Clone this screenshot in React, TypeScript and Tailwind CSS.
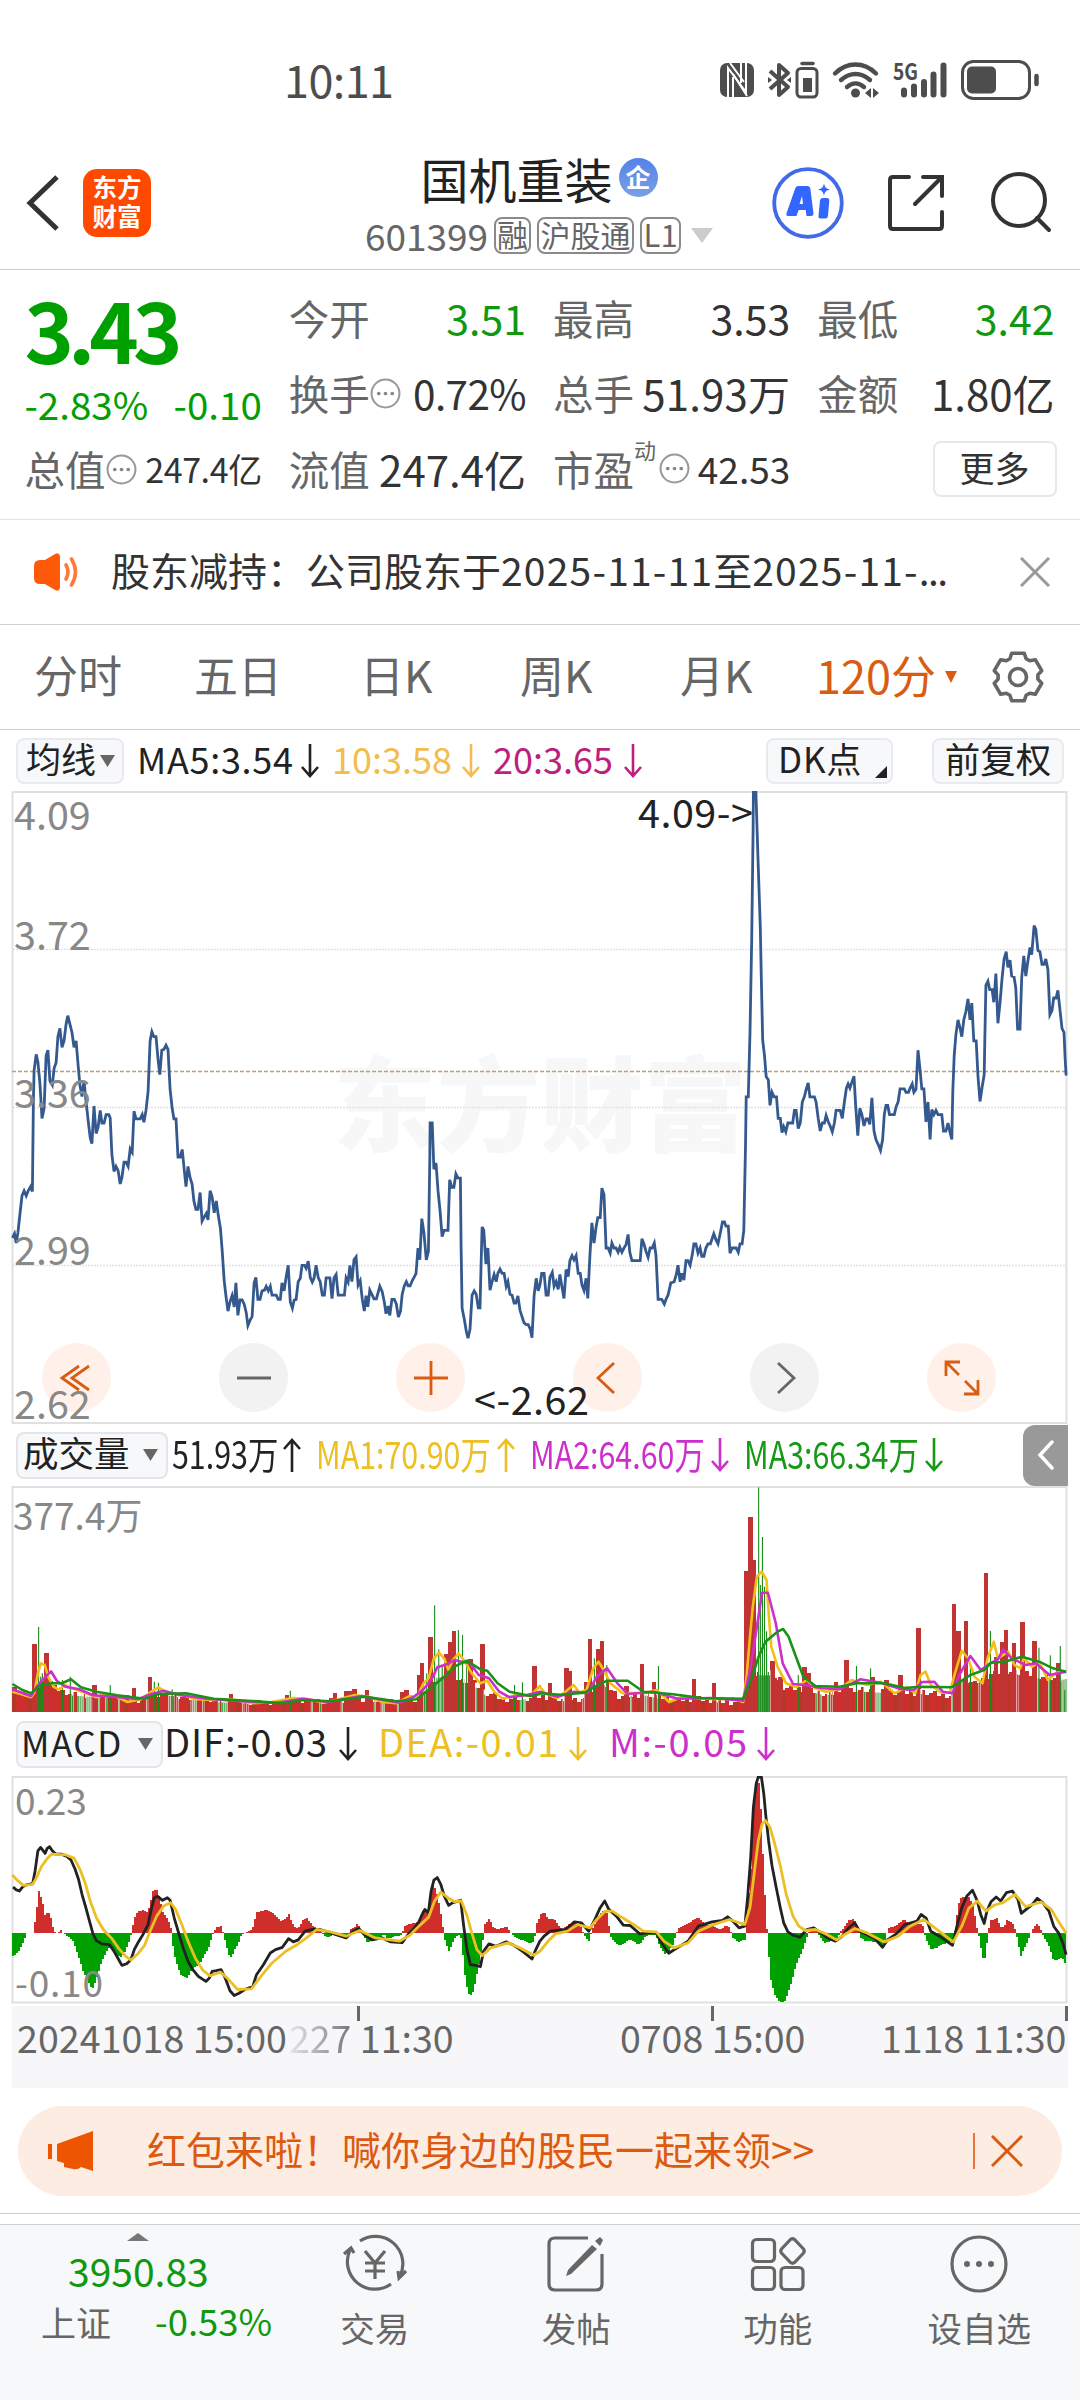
import type { ReactNode } from "react";

type Point = [number, number];

// Every series is stored on a 3136 unit wide grid, split in two halves
const GRID_X = 2.904;
const HALF = 1568;

const join = (left: Point[], right: Point[]): Point[] => [
  ...left,
  ...right.map(([x, y]): Point => [x + HALF, y]),
];

const toPoints = (series: Point[], scaleY: number, offset: number) =>
  series.map(([x, y]) => `${(x / GRID_X).toFixed(1)},${(y / scaleY - offset).toFixed(1)}`).join(" ");

const valueAt = (series: Point[], x: number) => {
  for (let i = 1; i < series.length; i++) {
    const [x0, y0] = series[i - 1];
    const [x1, y1] = series[i];
    if (x <= x1) return y0 + ((y1 - y0) * (x - x0)) / (x1 - x0 || 1);
  }
  return series[series.length - 1][1];
};

const PRICE = join(
  [
    [36, 1088], [42, 1078], [47, 1100], [52, 1076], [58, 1030], [64, 988], [70, 976], [76, 988], [82, 976], [89, 966], [94, 978],
    [97, 760], [99, 690], [105, 652], [110, 670], [116, 720], [122, 804], [128, 780], [134, 655], [139, 642], [145, 715], [152, 725],
    [157, 685], [163, 672], [168, 610], [174, 590], [180, 635], [186, 620], [192, 580], [197, 560], [203, 580], [209, 600], [215, 635],
    [221, 620], [227, 680], [232, 725], [238, 752], [244, 715], [250, 765], [256, 810], [262, 850], [267, 864], [273, 775], [279, 840],
    [285, 825], [291, 785], [296, 815], [302, 815], [308, 795], [316, 795], [320, 803], [325, 890], [331, 930], [337, 918], [343, 928],
    [349, 960], [354, 945], [360, 908], [366, 908], [372, 918], [378, 876], [384, 884], [389, 787], [395, 805], [407, 805], [413, 795],
    [418, 813], [424, 785], [430, 740], [436, 620], [441, 598], [447, 610], [453, 610], [459, 665], [464, 700], [470, 642], [476, 640],
    [482, 630], [488, 640], [494, 735], [500, 780], [505, 805], [511, 805], [517, 896], [523, 896], [529, 878], [535, 925], [540, 966],
    [546, 918], [552, 945], [558, 960], [563, 1000], [569, 1020], [575, 1020], [581, 980], [587, 1048], [593, 1038], [599, 1030],
    [604, 1045], [610, 976], [616, 990], [622, 1028], [628, 1000], [634, 1035], [640, 1065], [645, 1115], [651, 1190], [656, 1225],
    [662, 1262], [668, 1240], [674, 1225], [680, 1252], [685, 1195], [691, 1272], [697, 1235], [703, 1235], [709, 1245], [715, 1265],
    [720, 1296], [726, 1284], [732, 1275], [738, 1195], [743, 1182], [749, 1234], [755, 1234], [761, 1214], [768, 1212], [773, 1203],
    [779, 1214], [785, 1203], [790, 1224], [802, 1224], [808, 1234], [814, 1234], [819, 1195], [825, 1214], [831, 1180], [837, 1153],
    [843, 1240], [849, 1255], [854, 1236], [860, 1234], [866, 1192], [872, 1184], [877, 1153], [884, 1153], [889, 1160], [895, 1143],
    [901, 1182], [907, 1193], [912, 1184], [918, 1153], [924, 1182], [930, 1192], [936, 1224], [942, 1224], [947, 1183], [958, 1183],
    [964, 1232], [970, 1183], [976, 1175], [982, 1224], [1000, 1224], [1005, 1183], [1011, 1193], [1016, 1153], [1022, 1192],
    [1028, 1140], [1034, 1133], [1040, 1200], [1046, 1190], [1052, 1234], [1058, 1262], [1063, 1225], [1068, 1252], [1074, 1212],
    [1080, 1222], [1086, 1233], [1093, 1233], [1103, 1203], [1110, 1216], [1116, 1240], [1121, 1268], [1127, 1250], [1132, 1272],
    [1138, 1234], [1145, 1234], [1151, 1245], [1157, 1276], [1163, 1262], [1168, 1222], [1174, 1202], [1180, 1192], [1185, 1202],
    [1191, 1202], [1197, 1190], [1208, 1173], [1214, 1112], [1219, 1140], [1225, 1042], [1231, 1075], [1238, 1140], [1244, 1120],
    [1248, 900], [1249, 815], [1255, 815], [1260, 925], [1266, 910], [1272, 975], [1278, 1025], [1284, 1085], [1290, 1070],
    [1301, 1070], [1306, 950], [1312, 968], [1318, 968], [1324, 936], [1330, 946], [1337, 946], [1339, 1110], [1342, 1255],
    [1348, 1280], [1354, 1310], [1359, 1326], [1365, 1305], [1371, 1224], [1377, 1214], [1383, 1222], [1389, 1254], [1394, 1254],
    [1397, 1150], [1400, 1062], [1405, 1070], [1411, 1150], [1417, 1112], [1423, 1212], [1429, 1192], [1435, 1175], [1441, 1192],
    [1446, 1172], [1452, 1162], [1458, 1172], [1464, 1172], [1470, 1203], [1475, 1192], [1481, 1222], [1487, 1224], [1493, 1243],
    [1498, 1243], [1504, 1226], [1510, 1260], [1516, 1275], [1522, 1290], [1528, 1294], [1534, 1294], [1540, 1305], [1545, 1325],
    [1551, 1225], [1557, 1184], [1563, 1214],
  ],
  [
    [0, 1200], [5, 1172], [12, 1172], [18, 1224], [24, 1224], [29, 1182], [36, 1170], [41, 1203], [47, 1192], [53, 1210], [58, 1175],
    [64, 1205], [70, 1232], [76, 1163], [82, 1180], [87, 1142], [93, 1130], [99, 1140], [105, 1130], [111, 1172], [117, 1172],
    [122, 1200], [128, 1213], [134, 1184], [139, 1232], [145, 1130], [151, 1052], [157, 1100], [163, 1062], [168, 1040], [175, 1040],
    [180, 970], [186, 985], [192, 1112], [198, 1112], [204, 1124], [209, 1100], [215, 1112], [221, 1112], [227, 1122], [232, 1110],
    [238, 1122], [244, 1112], [250, 1104], [256, 1080], [261, 1122], [267, 1142], [291, 1142], [296, 1090], [302, 1102], [308, 1120],
    [314, 1134], [320, 1112], [326, 1112], [332, 1100], [337, 1130], [343, 1234], [354, 1234], [361, 1245], [366, 1234], [372, 1224],
    [380, 1195], [390, 1192], [396, 1175], [401, 1153], [407, 1192], [412, 1172], [418, 1188], [424, 1142], [430, 1142], [436, 1153],
    [442, 1130], [447, 1102], [453, 1102], [459, 1124], [465, 1112], [470, 1132], [476, 1132], [482, 1112], [488, 1102], [495, 1102],
    [505, 1078], [511, 1092], [517, 1102], [523, 1080], [530, 1050], [536, 1050], [540, 1060], [547, 1060], [552, 1124], [558, 1112],
    [570, 1112], [576, 1122], [581, 1102], [587, 1102], [592, 1070], [597, 870], [599, 753], [605, 753], [610, 600], [615, 380],
    [619, 120], [620, 27], [627, 27], [633, 180], [640, 350], [643, 480], [647, 618], [652, 655], [657, 705], [663, 712], [668, 773],
    [674, 742], [680, 753], [687, 753], [692, 804], [698, 804], [703, 838], [708, 824], [714, 836], [720, 815], [734, 815],
    [739, 785], [744, 785], [750, 828], [756, 815], [762, 765], [768, 752], [774, 732], [779, 720], [784, 753], [797, 753], [802, 765],
    [808, 804], [814, 834], [820, 815], [826, 815], [831, 797], [837, 812], [843, 822], [849, 836], [855, 815], [860, 785], [872, 785],
    [878, 804], [884, 765], [890, 732], [895, 722], [900, 732], [907, 715], [912, 704], [917, 775], [923, 845], [929, 780], [935, 795],
    [941, 822], [947, 805], [952, 805], [958, 818], [964, 755], [970, 834], [976, 855], [983, 867], [989, 880], [995, 855],
    [1000, 795], [1005, 773], [1010, 773], [1015, 795], [1029, 795], [1035, 775], [1040, 765], [1046, 734], [1058, 734], [1063, 742],
    [1070, 742], [1075, 732], [1081, 722], [1086, 742], [1092, 735], [1098, 642], [1104, 690], [1109, 734], [1115, 734], [1121, 812],
    [1127, 765], [1133, 854], [1138, 783], [1144, 795], [1150, 785], [1156, 795], [1167, 795], [1172, 834], [1179, 834], [1185, 815],
    [1191, 838], [1196, 854], [1199, 740], [1203, 655], [1208, 605], [1214, 570], [1220, 590], [1225, 610], [1231, 570], [1237, 550],
    [1243, 520], [1249, 570], [1254, 530], [1260, 620], [1267, 620], [1272, 705], [1278, 764], [1284, 730], [1290, 700], [1292, 620],
    [1295, 488], [1301, 478], [1306, 498], [1313, 498], [1318, 528], [1324, 460], [1330, 578], [1336, 530], [1342, 470], [1348, 425],
    [1354, 408], [1359, 445], [1365, 428], [1370, 466], [1377, 468], [1382, 495], [1387, 592], [1394, 592], [1399, 470], [1405, 418],
    [1411, 466], [1417, 430], [1423, 398], [1428, 415], [1435, 346], [1440, 355], [1446, 405], [1452, 408], [1458, 438], [1464, 438],
    [1469, 425], [1475, 450], [1481, 558], [1487, 548], [1492, 518], [1499, 518], [1504, 500], [1510, 545], [1516, 590], [1522, 600],
    [1525, 660], [1528, 702],
  ],
);

const VOLUME_FLOOR = join(
  [
    [36, 838], [90, 862], [108, 825], [135, 800], [155, 835], [200, 850], [270, 855], [340, 858], [400, 870], [440, 850], [500, 852],
    [560, 864], [650, 872], [740, 876], [830, 872], [900, 870], [960, 872], [1020, 862], [1090, 868], [1160, 872], [1200, 865],
    [1230, 840], [1260, 800], [1300, 790], [1330, 810], [1370, 815], [1400, 845], [1450, 865], [1500, 865], [1540, 860],
  ],
  [
    [0, 855], [60, 868], [120, 865], [150, 830], [185, 820], [220, 855], [300, 850], [380, 868], [450, 865], [520, 872], [590, 872],
    [600, 800], [630, 790], [670, 790], [700, 830], [760, 835], [830, 850], [900, 838], [960, 840], [1020, 845], [1100, 845],
    [1190, 858], [1205, 800], [1260, 820], [1300, 790], [1350, 780], [1400, 790], [1450, 800], [1500, 810], [1530, 800],
  ],
);

const VOLUME_UP = join(
  [
    [100, 703], [135, 730], [274, 826], [390, 834], [436, 801], [670, 852], [832, 856], [972, 848], [1006, 842], [1018, 844],
    [1029, 836], [1065, 841], [1168, 845], [1180, 841], [1216, 796], [1226, 760], [1250, 680], [1296, 733], [1308, 696],
    [1319, 664], [1366, 748], [1401, 702], [1552, 769],
  ],
  [
    [30, 819], [77, 774], [88, 784], [134, 816], [146, 686], [169, 717], [181, 694], [251, 828], [297, 762], [332, 815], [448, 808],
    [506, 819], [599, 482], [611, 321], [622, 450], [675, 752], [698, 800], [768, 771], [780, 790], [860, 815], [890, 750],
    [966, 802], [1006, 810], [1047, 795], [1099, 654], [1203, 583], [1215, 663], [1238, 634], [1296, 489], [1325, 740], [1342, 696],
    [1354, 660], [1377, 698], [1401, 637], [1436, 693], [1505, 759],
  ],
);

const VOLUME_DOWN = join(
  [
    [112, 651], [118, 800], [123, 790], [181, 810], [204, 800], [320, 825], [448, 815], [460, 818], [500, 838], [843, 842], [1239, 790],
    [1262, 586], [1274, 718], [1284, 770], [1331, 660], [1343, 675], [1355, 750], [1494, 825], [1517, 817],
  ],
  [
    [158, 745], [194, 765], [344, 768], [635, 232], [646, 381], [640, 525], [652, 530], [658, 664], [663, 786], [750, 795], [919, 768],
    [960, 775], [1250, 770], [1308, 663], [1449, 713], [1482, 736], [1511, 708], [1524, 840],
  ],
);

// Thin gaps where two falling bars sit side by side
const VOLUME_GAPS = [
  210, 228, 234, 240, 252, 258, 264, 287, 308, 345, 427, 491, 497, 503, 515, 556, 562, 568, 590, 635, 646, 652, 658, 706, 718, 905,
  930, 992, 1088, 1108, 1114, 1155, 1232, 1268, 1274, 1280, 1286, 1345, 1351, 1382, 1407, 1512, 1518, 1524, 1636, 1694, 1758, 1832,
  1873, 1879, 1896, 1910, 2083, 2204, 2210, 2216, 2222, 2228, 2234, 2371, 2383, 2404, 2414, 2488, 2510, 2543, 2549, 2555, 2675, 2764,
  2793, 2844, 2954, 3014, 3046, 3083, 3089, 3095,
];

const VOLUME_MA1 = join(
  [
    [36, 845], [60, 852], [90, 862], [100, 848], [110, 790], [118, 760], [130, 765], [140, 800], [155, 830], [170, 838], [190, 825],
    [210, 835], [250, 850], [280, 862], [300, 855], [330, 855], [370, 876], [410, 868], [435, 848], [460, 832], [480, 845],
    [520, 852], [570, 868], [620, 870], [670, 868], [730, 880], [790, 876], [850, 864], [890, 866], [940, 878], [990, 866],
    [1030, 855], [1070, 860], [1110, 876], [1150, 880], [1190, 858], [1210, 862], [1230, 820], [1245, 805], [1260, 745], [1275, 728],
    [1290, 745], [1302, 780], [1315, 750], [1332, 730], [1350, 755], [1370, 790], [1395, 820], [1415, 812], [1435, 845],
    [1460, 866], [1500, 855], [1540, 858], [1568, 828],
  ],
  [
    [0, 830], [15, 850], [50, 865], [80, 840], [98, 825], [115, 848], [135, 840], [155, 775], [170, 755], [185, 780], [205, 820],
    [240, 850], [300, 848], [340, 840], [375, 876], [420, 858], [450, 864], [510, 868], [560, 866], [590, 876], [600, 800],
    [610, 680], [618, 590], [630, 500], [644, 485], [658, 510], [665, 620], [672, 710], [690, 770], [715, 820], [745, 832],
    [775, 810], [800, 835], [830, 845], [870, 838], [905, 810], [950, 825], [990, 815], [1030, 850], [1065, 832], [1090, 850],
    [1105, 795], [1120, 785], [1135, 825], [1165, 848], [1190, 848], [1205, 790], [1225, 722], [1243, 745], [1262, 800],
    [1285, 820], [1300, 745], [1318, 695], [1330, 745], [1360, 725], [1378, 765], [1395, 775], [1405, 745], [1430, 770],
    [1450, 755], [1475, 810], [1500, 788], [1515, 785], [1528, 785],
  ],
);

const VOLUME_MA2 = join(
  [
    [36, 838], [90, 858], [105, 832], [125, 808], [148, 784], [165, 812], [190, 830], [230, 838], [270, 856], [330, 860], [400, 868],
    [440, 852], [475, 842], [520, 855], [600, 866], [700, 874], [800, 879], [880, 866], [950, 876], [1050, 858], [1100, 868],
    [1160, 878], [1200, 862], [1230, 838], [1255, 805], [1270, 772], [1300, 762], [1320, 750], [1340, 755], [1365, 760],
    [1390, 795], [1420, 805], [1450, 845], [1480, 862], [1530, 855], [1568, 845],
  ],
  [
    [0, 845], [50, 860], [100, 845], [140, 848], [165, 800], [195, 775], [225, 820], [255, 852], [330, 845], [400, 866], [500, 864],
    [590, 872], [612, 770], [630, 650], [645, 548], [662, 548], [685, 640], [705, 760], [735, 822], [770, 825], [820, 835],
    [870, 838], [930, 808], [990, 818], [1050, 838], [1085, 840], [1110, 816], [1145, 815], [1170, 845], [1198, 850], [1220, 790],
    [1250, 738], [1280, 780], [1305, 762], [1330, 748], [1345, 718], [1370, 745], [1410, 765], [1440, 760], [1480, 795], [1528, 785],
  ],
);

const VOLUME_MA3 = join(
  [
    [36, 822], [65, 840], [90, 850], [115, 828], [150, 820], [180, 820], [206, 808], [235, 832], [280, 845], [340, 856], [420, 866],
    [460, 852], [540, 850], [620, 866], [720, 872], [820, 880], [880, 870], [960, 874], [1060, 860], [1150, 874], [1210, 868],
    [1250, 835], [1290, 800], [1320, 770], [1355, 752], [1395, 778], [1415, 782], [1445, 820], [1480, 845], [1540, 858], [1568, 852],
  ],
  [
    [0, 850], [60, 854], [130, 848], [160, 830], [195, 812], [255, 812], [300, 845], [380, 852], [470, 864], [590, 866], [615, 805],
    [635, 740], [655, 695], [690, 665], [706, 657], [722, 680], [745, 745], [765, 800], [800, 828], [870, 830], [920, 820],
    [1000, 820], [1060, 834], [1100, 830], [1195, 832], [1250, 795], [1290, 780], [1310, 758], [1350, 755], [1400, 740],
    [1450, 755], [1490, 775], [1528, 785],
  ],
);

const MACD_BARS = join(
  [
    [36, 735], [52, 722], [68, 690], [76, 666], [96, 664], [104, 600], [112, 537], [118, 560], [125, 585], [130, 618], [135, 605],
    [143, 605], [150, 640], [158, 664], [166, 664], [176, 657], [184, 668], [200, 677], [210, 690], [218, 710], [228, 740],
    [238, 775], [250, 800], [262, 825], [268, 830], [276, 810], [284, 785], [292, 755], [302, 735], [314, 710], [320, 705],
    [330, 725], [348, 738], [360, 725], [370, 700], [380, 668], [385, 640], [392, 610], [400, 600], [416, 597], [424, 605],
    [432, 590], [436, 570], [442, 540], [455, 537], [463, 565], [470, 600], [482, 620], [494, 640], [498, 690], [505, 730],
    [514, 765], [524, 790], [534, 795], [543, 800], [552, 780], [560, 768], [578, 760], [590, 735], [604, 710], [614, 675],
    [620, 660], [628, 648], [640, 645], [648, 670], [655, 700], [662, 730], [670, 738], [680, 715], [690, 700], [698, 675],
    [712, 662], [726, 660], [736, 640], [742, 605], [752, 602], [772, 597], [790, 603], [804, 620], [816, 630], [830, 620],
    [838, 608], [846, 635], [858, 650], [868, 648], [878, 628], [890, 622], [904, 640], [912, 648], [930, 660], [938, 672],
    [950, 680], [965, 672], [990, 675], [1010, 680], [1016, 655], [1030, 648], [1037, 636], [1045, 655], [1055, 670], [1062, 690],
    [1072, 694], [1085, 682], [1100, 685], [1115, 666], [1120, 682], [1135, 680], [1150, 674], [1165, 672], [1172, 645],
    [1190, 638], [1205, 635], [1216, 625], [1225, 600], [1235, 595], [1245, 600], [1252, 520], [1258, 520], [1268, 550],
    [1276, 590], [1284, 640], [1288, 675], [1294, 700], [1303, 722], [1310, 700], [1320, 680], [1335, 667], [1340, 700],
    [1347, 780], [1355, 830], [1362, 853], [1370, 850], [1376, 825], [1385, 780], [1393, 740], [1402, 680], [1406, 640],
    [1420, 622], [1428, 645], [1440, 655], [1455, 650], [1470, 648], [1480, 662], [1490, 675], [1505, 684], [1520, 688],
    [1535, 697], [1550, 692], [1556, 640], [1566, 620],
  ],
  [
    [0, 608], [14, 606], [22, 625], [40, 625], [50, 640], [65, 655], [80, 640], [100, 634], [115, 640], [125, 668], [135, 682],
    [142, 692], [148, 660], [158, 640], [170, 615], [182, 598], [192, 600], [198, 640], [205, 680], [220, 698], [235, 702],
    [250, 690], [265, 685], [280, 698], [295, 695], [300, 680], [315, 672], [335, 670], [345, 700], [360, 728], [370, 725],
    [385, 700], [395, 665], [402, 652], [425, 640], [440, 630], [456, 618], [470, 630], [480, 640], [500, 645], [520, 655],
    [540, 643], [550, 650], [558, 680], [575, 692], [595, 685], [600, 600], [610, 500], [620, 270], [627, 210], [636, 220],
    [642, 330], [648, 480], [654, 595], [660, 690], [668, 800], [680, 850], [695, 873], [710, 868], [720, 840], [730, 810],
    [740, 770], [750, 740], [760, 720], [770, 690], [778, 662], [800, 650], [810, 675], [825, 695], [845, 690], [862, 685],
    [870, 662], [885, 645], [895, 628], [910, 622], [920, 645], [930, 680], [945, 690], [960, 690], [985, 695], [995, 705],
    [1005, 670], [1012, 650], [1030, 645], [1055, 625], [1070, 635], [1085, 640], [1110, 640], [1118, 680], [1135, 715],
    [1150, 710], [1165, 700], [1180, 695], [1200, 690], [1208, 620], [1218, 560], [1245, 558], [1258, 590], [1265, 640],
    [1275, 680], [1283, 740], [1292, 740], [1300, 660], [1308, 628], [1325, 620], [1335, 645], [1345, 650], [1355, 625],
    [1370, 635], [1380, 660], [1388, 700], [1395, 735], [1405, 710], [1415, 690], [1425, 665], [1435, 645], [1443, 636],
    [1453, 655], [1462, 680], [1475, 700], [1490, 748], [1515, 740], [1530, 770],
  ],
);

const DIF = join(
  [
    [38, 528], [46, 536], [56, 540], [66, 528], [76, 522], [95, 518], [102, 480], [110, 420], [118, 410], [124, 418], [131, 428],
    [137, 413], [144, 408], [152, 420], [162, 430], [178, 430], [194, 437], [206, 447], [218, 475], [228, 505], [238, 550],
    [248, 585], [260, 630], [270, 668], [280, 688], [296, 698], [318, 700], [330, 718], [342, 740], [354, 762], [368, 757],
    [380, 745], [390, 715], [402, 692], [416, 668], [430, 640], [438, 600], [448, 560], [458, 556], [472, 568], [486, 560],
    [494, 568], [506, 620], [520, 670], [532, 710], [546, 750], [560, 775], [576, 795], [598, 810], [608, 800], [616, 780],
    [628, 778], [642, 775], [654, 800], [668, 838], [680, 852], [694, 845], [712, 833], [734, 825], [745, 790], [765, 760],
    [785, 725], [800, 715], [820, 708], [838, 682], [852, 692], [866, 686], [886, 660], [905, 655], [930, 655], [960, 665],
    [1005, 680], [1025, 660], [1042, 652], [1060, 672], [1080, 686], [1110, 680], [1135, 692], [1168, 694], [1185, 670],
    [1200, 655], [1215, 635], [1228, 605], [1234, 595], [1244, 605], [1252, 540], [1260, 508], [1270, 500], [1280, 520],
    [1290, 555], [1303, 583], [1315, 575], [1338, 568], [1346, 640], [1356, 715], [1366, 760], [1382, 762], [1395, 766],
    [1404, 720], [1420, 698], [1440, 705], [1470, 692], [1492, 702], [1518, 720], [1545, 743], [1556, 715], [1568, 690],
  ],
  [
    [12, 675], [30, 660], [75, 655], [100, 632], [120, 635], [142, 660], [158, 628], [175, 590], [188, 570], [200, 595], [222, 615],
    [242, 642], [262, 643], [290, 668], [320, 664], [338, 665], [350, 690], [374, 726], [395, 712], [430, 690], [460, 645],
    [500, 632], [530, 628], [545, 617], [560, 630], [578, 650], [595, 645], [603, 560], [612, 440], [620, 290], [628, 220],
    [634, 200], [643, 200], [650, 250], [656, 315], [664, 390], [674, 465], [686, 530], [698, 590], [708, 635], [720, 662],
    [735, 672], [755, 678], [775, 655], [795, 650], [815, 665], [835, 680], [858, 690], [875, 678], [895, 652], [914, 635],
    [928, 660], [945, 668], [970, 680], [995, 708], [1010, 685], [1035, 668], [1060, 640], [1095, 630], [1107, 610], [1122, 622],
    [1135, 660], [1160, 675], [1198, 702], [1212, 640], [1225, 590], [1240, 555], [1256, 538], [1270, 570], [1280, 610],
    [1290, 637], [1298, 600], [1310, 572], [1325, 558], [1338, 570], [1355, 545], [1372, 540], [1388, 565], [1398, 607],
    [1412, 595], [1430, 580], [1444, 562], [1460, 575], [1478, 600], [1492, 645], [1508, 668], [1520, 700], [1528, 730],
  ],
);

const DEA = join(
  [
    [36, 492], [50, 508], [68, 523], [95, 520], [106, 500], [120, 468], [136, 445], [150, 430], [190, 432], [215, 442], [232, 475],
    [248, 518], [262, 570], [280, 620], [300, 655], [325, 682], [345, 712], [365, 735], [380, 746], [400, 728], [420, 702],
    [436, 660], [455, 615], [475, 585], [495, 575], [510, 595], [528, 640], [548, 695], [568, 742], [590, 778], [610, 793],
    [640, 782], [660, 800], [690, 834], [730, 832], [760, 792], [790, 755], [830, 720], [860, 702], [890, 680], [920, 655],
    [960, 662], [1005, 675], [1045, 658], [1090, 680], [1160, 690], [1190, 672], [1220, 642], [1245, 618], [1262, 570],
    [1280, 543], [1300, 560], [1320, 572], [1340, 570], [1355, 610], [1370, 665], [1385, 715], [1400, 733], [1425, 710],
    [1475, 695], [1510, 710], [1550, 732], [1568, 720],
  ],
  [
    [0, 720], [25, 688], [45, 668], [80, 660], [110, 640], [145, 650], [165, 625], [190, 600], [210, 600], [240, 620], [275, 642],
    [300, 660], [338, 662], [360, 690], [390, 710], [430, 695], [460, 660], [500, 642], [550, 625], [595, 640], [610, 590],
    [622, 490], [634, 390], [645, 340], [655, 330], [668, 350], [682, 400], [698, 465], [715, 550], [735, 615], [752, 645],
    [770, 658], [800, 655], [830, 668], [862, 686], [885, 670], [915, 652], [950, 665], [1000, 692], [1040, 675], [1075, 645],
    [1115, 625], [1140, 645], [1200, 692], [1225, 645], [1245, 592], [1270, 570], [1295, 600], [1320, 582], [1345, 575],
    [1380, 550], [1410, 587], [1455, 573], [1485, 595], [1505, 630], [1528, 666],
  ],
);

const MACD_SCALE = 2.984;
const MACD_ZERO = 666;

function Caret({ className = "" }: { className?: string }) {
  return (
    <svg className={`shrink-0 ${className}`} width="15" height="12" viewBox="0 0 15 12">
      <path d="M0 0h15L7.5 12z" fill="#666" />
    </svg>
  );
}

function Arrow({ up = false }: { up?: boolean }) {
  return (
    <svg className="shrink-0" width="20" height="34" viewBox="0 0 20 34" fill="none" stroke="currentColor" strokeWidth="2.6">
      {up ? <path d="M10 34V2M2 11l8-9 8 9" /> : <path d="M10 0v32M2 23l8 9 8-9" />}
    </svg>
  );
}

function Dots() {
  return (
    <svg className="shrink-0" width="31" height="31" viewBox="0 0 30 30">
      <circle cx="15" cy="15" r="13.5" fill="none" stroke="#999" strokeWidth="2" />
      <g fill="#888">
        <circle cx="8.5" cy="15" r="1.8" />
        <circle cx="15" cy="15" r="1.8" />
        <circle cx="21.5" cy="15" r="1.8" />
      </g>
    </svg>
  );
}

function Stat({
  label,
  value,
  mark,
  valueClass = "text-[41.5px]",
}: {
  label: string;
  value: string;
  mark?: ReactNode;
  valueClass?: string;
}) {
  return (
    <div className="flex h-[75.5px] items-center whitespace-nowrap pb-1">
      <span className="text-[40.5px] text-[#666]">{label}</span>
      {mark}
      <span className={`ml-auto ${valueClass}`}>{value}</span>
    </div>
  );
}

// Text drawn narrower than the font, inside a box of its final width
function Narrow({ className, children }: { className: string; children: ReactNode }) {
  return (
    <span className={`block shrink-0 whitespace-nowrap ${className}`}>
      <span className="inline-block origin-left scale-x-[0.8]">{children}</span>
    </span>
  );
}

function RoundButton({ gray = false, children }: { gray?: boolean; children: ReactNode }) {
  return (
    <div
      className={`flex size-[69px] items-center justify-center rounded-full ${
        gray ? "bg-[#00000c]/5 text-[#666]" : "bg-[#ff6a20]/10 text-[#d95c13]"
      }`}
    >
      <svg width="36" height="36" viewBox="0 0 36 36" fill="none" stroke="currentColor" strokeWidth="2.8">
        {children}
      </svg>
    </div>
  );
}

function StatusBar() {
  return (
    <div className="flex h-[104px] items-center pt-[56px] text-[#4d4d4d]">
      <span className="ml-[284px] w-[436px] pb-1 text-[45px] tracking-[-0.6px]">10:11</span>
      <svg width="320" height="60" viewBox="0 -10 320 60" fill="none" stroke="#4d4d4d">
        <rect x="0" y="3" width="34" height="34" rx="7" fill="#4d4d4d" stroke="none" />
        <path d="M8 38V8l18 24V2" stroke="#fff" strokeWidth="2" />
        <path d="M13 38V17M21 3v20M10 3l14 19M13 14l14 22" stroke="#fff" strokeWidth="2" />
        <path d="M50 11l18 16-9 8V5l9 8-18 16" strokeWidth="4" strokeLinejoin="round" />
        <path d="M48 17l4 3-4 3zM71 17l-4 3 4 3z" fill="#4d4d4d" stroke="none" />
        <rect x="77" y="8.500" width="20" height="28.500" rx="4" strokeWidth="3" />
        <path d="M82 3.500h11" strokeWidth="3.500" strokeLinecap="round" />
        <rect x="83" y="18" width="9" height="14" fill="#4d4d4d" stroke="none" />
        <path d="M115 13.500c12-12 29-12 41 0M121 20c9-8 20-8 29 0M127 27c6-5 11-5 17 0" strokeWidth="4.400" strokeLinecap="round" />
        <circle cx="135.500" cy="33" r="4.500" fill="#4d4d4d" stroke="none" />
        <path d="M145 33l6-5v10zM153 28v10l6-5z" fill="#4d4d4d" stroke="none" />
        <text x="173" y="20" fontSize="23" fontWeight="700" textLength="25" lengthAdjust="spacingAndGlyphs" fill="#4d4d4d" stroke="none">
          5G
        </text>
        <path d="M184 30.500v4M194 26.500v8M204 22v12.500M213.500 14.500v20M223.500 5.500v29" strokeWidth="6" strokeLinecap="round" />
        <rect x="242.500" y="1.500" width="67" height="37" rx="11" strokeWidth="3" />
        <rect x="247" y="6.500" width="29" height="27" rx="5" fill="#4d4d4d" stroke="none" />
        <path d="M316.500 16v8" strokeWidth="4.500" strokeLinecap="round" />
      </svg>
    </div>
  );
}

function Header() {
  return (
    <header className="flex h-[166px] items-center border-b border-[#cfcfcf]">
      <div className="flex w-[360px] items-center pl-[26px] pt-8">
        <svg width="34" height="56" viewBox="0 0 34 56" fill="none" stroke="#333" strokeWidth="5">
          <path d="M31 2L4 28l27 26" />
        </svg>
        <div className="ml-[23px] flex size-[68px] items-center justify-center rounded-[14px] bg-[#ff4800] pb-1 text-center text-[24.5px] leading-[29px] font-bold text-white">
          东方
          <br />
          财富
        </div>
      </div>
      <div className="flex w-[358px] flex-col items-center pt-7">
        <div className="flex items-center">
          <span className="text-[48px] leading-[60px] text-[#222]">国机重装</span>
          <span className="ml-1.5 flex size-[39px] items-center justify-center rounded-full bg-linear-to-b from-[#5580e8] to-[#7ba0e6] pb-[3px] text-[25px] font-bold text-white">
            企
          </span>
        </div>
        <div className="mt-[9px] flex items-center gap-1.5 text-[32px] text-[#666]">
          <span className="text-[37px]">601399</span>
          <span className="flex h-[37px] w-[37px] items-center justify-center rounded-lg border-2 border-[#8a8a8a] pb-[3px] text-[31px]">融</span>
          <span className="flex h-[37px] w-[97px] items-center justify-center rounded-lg border-2 border-[#8a8a8a] pb-[3px] text-[30px]">沪股通</span>
          <span className="flex h-[37px] w-[41px] items-center justify-center rounded-lg border-2 border-[#8a8a8a] pb-[3px] text-[31px]">L1</span>
          <svg className="ml-1" width="22" height="15" viewBox="0 0 22 15">
            <path d="M0 0h22L11 15z" fill="#ccc" />
          </svg>
        </div>
      </div>
      <svg className="ml-[54px] mt-8" width="72" height="72" viewBox="0 0 72 72" fill="#3366ff">
        <circle cx="36" cy="36" r="33.800" fill="none" stroke="#4169e8" strokeWidth="3.800" />
        <path
          fillRule="evenodd"
          d="M26 19h9q3 0 3.400 3l3 24q.4 3-2.400 3h-4.500l-.8-6h-7l-2.300 6h-8q-3 0-1.800-3l8.400-24q1-3 3-3zm4 10l-2.500 8h3.500z"
        />
        <path d="M50.500 31h4.500q2.500 0 2.300 2.500l-1.300 15.500q-.3 2.500-2.800 2.500h-4.500q-2.500 0-2.200-2.500l1.500-15.500q.2-2.500 2.500-2.500zM52 16.500c1 4 2 5 6 6-4 1-5 2-6 6-1-4-2-5-6-6 4-1 5-2 6-6z" />
      </svg>
      <svg className="ml-[43px] mt-8" width="60" height="60" viewBox="0 0 60 60" fill="none" stroke="#333" strokeWidth="4" strokeLinecap="round">
        <path d="M22 4H6q-3 0-3 3v46q0 3 3 3h46q3 0 3-3V39M36 4h19v19M55 4L28 31" />
      </svg>
      <svg className="ml-[43px] mt-8" width="64" height="64" viewBox="0 0 64 64" fill="none" stroke="#333" strokeWidth="4" strokeLinecap="round">
        <circle cx="29" cy="29" r="26" />
        <path d="M47 47l12 12" />
      </svg>
    </header>
  );
}

function Quote() {
  return (
    <section className="h-[250px] border-b border-[#e3e3e3] pl-[24.500px] pr-[25.500px] pt-3">
      <div className="grid grid-cols-4 gap-x-[27px] text-[#333]">
        <div className="whitespace-nowrap text-[#00a000]">
          <div className="h-[96px] pt-[4px] text-[84px] leading-[84px] font-bold tracking-[-6px]">3.43</div>
          <div className="flex h-[54px] items-center justify-between pb-1 text-[38.500px]">
            <span>-2.83%</span>
            <span>-0.10</span>
          </div>
          <div className="flex h-[76px] items-center pb-0.5">
            <span className="text-[40.5px] text-[#666]">总值</span>
            <Dots />
            <span className="ml-auto text-[34px] tracking-[-0.4px] text-[#333]">247.4亿</span>
          </div>
        </div>
        <div>
          <Stat label="今开" value="3.51" valueClass="text-[41px] text-[#109810]" />
          <Stat label="换手" value="0.72%" mark={<Dots />} valueClass="text-[40.5px] tracking-[-0.6px]" />
          <Stat label="流值" value="247.4亿" valueClass="text-[42px]" />
        </div>
        <div>
          <Stat label="最高" value="3.53" valueClass="text-[41px]" />
          <Stat label="总手" value="51.93万" valueClass="text-[42px] tracking-[0.2px]" />
          <Stat
            label="市盈"
            value="42.53"
            mark={
              <>
                <span className="mb-10 w-[25px] text-[22px] text-[#666]">动</span>
                <Dots />
              </>
            }
            valueClass="text-[37px]"
          />
        </div>
        <div>
          <Stat label="最低" value="3.42" valueClass="text-[41px] text-[#109810]" />
          <Stat label="金额" value="1.80亿" valueClass="text-[42px]" />
          <div className="flex h-[72px] items-center justify-end">
            <div className="mr-[-2px] flex h-[56px] w-[124px] items-center justify-center rounded-lg border-2 border-[#e6e8ea] pb-1.5 text-[35px]">更多</div>
          </div>
        </div>
      </div>
    </section>
  );
}

function Notice() {
  return (
    <div className="flex h-[105px] items-center border-b border-[#cfcfcf] text-[39px] text-[#333]">
      <svg className="ml-[33px]" width="46" height="40" viewBox="0 0 46 40">
        <path d="M27 4v32q-1 4-5 2l-10-6H7q-6 0-6-6V14q0-6 6-6h5l10-6q4-2 5 2z" fill="#ff5a0a" />
        <path d="M33 13q4 7 0 14M38.500 7q8 13 0 26" fill="none" stroke="#ff7a3a" strokeWidth="3.600" strokeLinecap="round" />
      </svg>
      <div className="ml-[32px] flex w-[909px] whitespace-nowrap pb-1.5">
        <span>股东减持：公司股东于</span>
        <span className="tracking-[1.2px]">2025-11-11</span>
        <span>至</span>
        <span className="tracking-[1.2px]">2025-11-</span>
        <span className="tracking-[-1.6px]">...</span>
      </div>
      <svg width="30" height="30" viewBox="0 0 30 30" stroke="#999" strokeWidth="3">
        <path d="M1 1l28 28M29 1L1 29" />
      </svg>
    </div>
  );
}

function Gear() {
  const teeth = Array.from({ length: 6 }, (_, i) =>
    [[-24, 20], [-15, 24.5], [15, 24.5], [24, 20]]
      .map(([angle, r]) => {
        const a = ((i * 60 + angle - 90) * Math.PI) / 180;
        return `${(27 + r * Math.cos(a)).toFixed(1)},${(27 + r * Math.sin(a)).toFixed(1)}`;
      })
      .join(" "),
  ).join(" ");
  return (
    <svg width="54" height="54" viewBox="0 0 54 54" fill="none" stroke="#666" strokeWidth="3.600" strokeLinejoin="round">
      <polygon points={teeth} />
      <circle cx="27" cy="27" r="8.500" />
    </svg>
  );
}

function Tabs() {
  return (
    <nav className="flex h-[105px] items-center border-b border-[#cfcfcf] whitespace-nowrap pl-[34px] text-[44px] text-[#666] *:pb-1.5">
      <span className="w-[160px]">分时</span>
      <span className="w-[166px]">五日</span>
      <span className="w-[160px]">日K</span>
      <span className="w-[160px]">周K</span>
      <span className="w-[136px]">月K</span>
      <span className="w-[129px] text-[45px] text-[#d95c13]">120分</span>
      <svg className="pb-0!" width="12" height="12" viewBox="0 0 12 12">
        <path d="M0 0h12L6 12z" fill="#d95c13" />
      </svg>
      <span className="ml-[34px] pb-0!">
        <Gear />
      </span>
    </nav>
  );
}

function AverageRow() {
  return (
    <div className="flex h-[61px] items-center whitespace-nowrap pl-4 text-[36px] text-[#222]">
      <div className="flex h-[46px] w-[108px] items-center rounded-lg border-2 border-[#e8eaee] bg-[#f7f8fa] pl-2 text-[35px]">
        <span className="pb-1.5">均线</span>
        <Caret className="ml-1" />
      </div>
      <div className="ml-[13px] flex w-[195px] items-center">
        <span className="w-[163px] pb-1.5 tracking-[0.7px]">MA5:3.54</span>
        <Arrow />
      </div>
      <div className="flex w-[161px] items-center text-[#f2bd4e]">
        <span className="w-[129px] pb-1.5">10:3.58</span>
        <Arrow />
      </div>
      <div className="flex w-[273px] items-center text-[#bd1f7d]">
        <span className="w-[130px] pb-1.5">20:3.65</span>
        <Arrow />
      </div>
      <div className="relative flex h-[46px] w-[127px] items-center rounded-lg border-2 border-[#e8eaee] bg-[#f7f8fa] pl-2.5 pb-1.5 text-[35px] tracking-[0.8px]">
        DK点
        <svg className="absolute right-1 bottom-1" width="12" height="12">
          <path d="M12 0v12H0z" fill="#222" />
        </svg>
      </div>
      <div className="ml-[39px] flex h-[46px] w-[132px] items-center justify-center rounded-lg border-2 border-[#e8eaee] bg-[#f7f8fa] pb-1.5 text-[35.5px]">
        前复权
      </div>
    </div>
  );
}

function PriceChart() {
  return (
    <div className="relative h-[633px]">
      <div className="absolute top-[257px] left-[333px] text-[103.5px] leading-none font-black text-[#f7f7f7]">东方财富</div>
      <svg className="absolute inset-0" width="1080" height="633" viewBox="0 0 1080 633" fill="none">
        <rect x="12.500" y="1" width="1054" height="631" stroke="#e0e0e0" strokeWidth="2" />
        <path d="M13 158.500H1066M13 316.500H1066M13 474.500H1066" stroke="#e3e3e3" strokeWidth="1.500" strokeDasharray="2 1" />
        <path d="M12 280.500H1067" stroke="#c89a76" strokeWidth="1.600" strokeDasharray="4 2" />
        <polyline points={toPoints(PRICE, 2.376, 11)} stroke="#34598f" strokeWidth="2.800" />
      </svg>
      <div className="absolute top-[552px] left-[42px] flex gap-[108px]">
        <RoundButton>
          <path d="M20 6L3 18l17 12M30 6L13 18l17 12" />
        </RoundButton>
        <RoundButton gray>
          <path d="M1 18h34" />
        </RoundButton>
        <RoundButton>
          <path d="M1 18h34M18 1v34" />
        </RoundButton>
        <RoundButton>
          <path d="M24 3L8 18l16 15" />
        </RoundButton>
        <RoundButton gray>
          <path d="M11 3l16 15-16 15" />
        </RoundButton>
        <RoundButton>
          <path d="M16 2H2v14M2 2l13 13M20 34h14V20M34 34L21 21" />
        </RoundButton>
      </div>
      <div className="text-[39.5px] leading-none text-[#888]">
        <span className="absolute top-[2px] left-[14px]">4.09</span>
        <span className="absolute top-[122px] left-[14px]">3.72</span>
        <span className="absolute top-[280px] left-[14px]">3.36</span>
        <span className="absolute top-[437px] left-[14px]">2.99</span>
        <span className="absolute top-[591px] left-[14px]">2.62</span>
        <span className="absolute top-0 left-[638px] tracking-[0.5px] text-[#222]">4.09-&gt;</span>
        <span className="absolute top-[587px] left-[474px] tracking-[0.5px] text-[#222]">&lt;-2.62</span>
      </div>
    </div>
  );
}

function VolumePanel() {
  const floor = Array.from({ length: 263 }, (_, i) => {
    const x = 36 + i * 11.62;
    const jitter = ((i * 37) % 23) - 9;
    return { x, y: valueAt(VOLUME_FLOOR, x) + jitter * 0.9 };
  });
  return (
    <section>
      <div className="flex h-[62px] items-center whitespace-nowrap pl-4 text-[38px] text-[#222]">
        <div className="flex h-[47px] w-[152px] items-center justify-between rounded-lg border-2 border-[#e2e5ea] bg-[#f7f8fa] pr-2 pl-[5px] text-[35.5px]">
          <span className="pb-1.5">成交量</span>
          <Caret />
        </div>
        <Narrow className="ml-1 w-[110px] pb-1">51.93万</Narrow>
        <Arrow up />
        <Narrow className="ml-3.5 w-[180px] pb-1 text-[#ecc024]">MA1:70.90万</Narrow>
        <span className="text-[#ecc024]">
          <Arrow up />
        </span>
        <Narrow className="ml-3.5 w-[180px] pb-1 text-[#cc2fcc]">MA2:64.60万</Narrow>
        <span className="text-[#cc2fcc]">
          <Arrow />
        </span>
        <Narrow className="ml-3.5 w-[180px] pb-1 text-[#169a16]">MA3:66.34万</Narrow>
        <span className="text-[#169a16]">
          <Arrow />
        </span>
        <div className="mr-3 ml-auto flex h-[61px] w-[45px] items-center justify-center rounded-l-xl bg-[#999]">
          <svg width="18" height="30" viewBox="0 0 18 30" fill="none" stroke="#fff" strokeWidth="3.500" strokeLinecap="round">
            <path d="M15 2L3 15l12 13" />
          </svg>
        </div>
      </div>
      <div className="relative h-[226px]">
        <svg className="absolute inset-0" width="1080" height="226" viewBox="0 0 1080 226" fill="none">
          <rect x="12.500" y="1" width="1054" height="224" stroke="#e0e0e0" strokeWidth="2" />
          <g fill="#cc2f2c" shapeRendering="crispEdges">
            {floor.map(({ x, y }, i) => (
              <rect key={i} x={x / GRID_X} y={y / 3 - 76} width="4.200" height={302 - y / 3} fill={i % 4 ? "#cc2f2c" : "#b03a26"} />
            ))}
            {VOLUME_UP.map(([x, y]) => (
              <rect key={x} x={x / GRID_X - 2} y={y / 3 - 76} width="4.200" height={302 - y / 3} fill="#c03533" />
            ))}
          </g>
          <rect x="758.500" y="88" width="11" height="138" fill="#fff" />
          {VOLUME_GAPS.map((x) => (
            <g key={x}>
              <rect x={x / GRID_X - 0.8} y={valueAt(VOLUME_FLOOR, x) / 3 - 79} width="2" height="90" fill="#fff" />
              <rect x={x / GRID_X - 0.2} y={valueAt(VOLUME_FLOOR, x) / 3 - 74} width="0.900" height="90" fill="#1a8a1a" />
            </g>
          ))}
          {VOLUME_DOWN.map(([x, y]) => (
            <rect key={x} x={x / GRID_X - 0.5} y={y / 3 - 76} width="1.100" height={302 - y / 3} fill="#1a8a1a" />
          ))}
          <g strokeWidth="2.600" strokeLinejoin="round">
            <polyline points={toPoints(VOLUME_MA1, 3, 76)} stroke="#f2c014" />
            <polyline points={toPoints(VOLUME_MA2, 3, 76)} stroke="#cc2fcc" />
            <polyline points={toPoints(VOLUME_MA3, 3, 76)} stroke="#1a921a" />
          </g>
        </svg>
        <span className="absolute top-[10px] left-[13px] text-[37px] leading-none text-[#888]">377.4万</span>
      </div>
    </section>
  );
}

function MacdPanel() {
  const bars = Array.from({ length: 527 }, (_, i) => {
    const x = 36 + i * 5.808;
    return { x: x / GRID_X, h: (valueAt(MACD_BARS, x) - MACD_ZERO) / MACD_SCALE };
  });
  const zero = MACD_ZERO / MACD_SCALE - 66;
  return (
    <section>
      <div className="flex h-[64px] items-center whitespace-nowrap pl-4 text-[38px] text-[#222]">
        <div className="flex h-[47px] w-[147px] items-center justify-between rounded-lg border-2 border-[#e2e5ea] bg-[#f7f8fa] pr-2 pl-[3px] text-[35px]">
          <span className="pb-1.5 tracking-[1.5px]">MACD</span>
          <Caret />
        </div>
        <span className="w-[175px] pb-1.5 pl-px tracking-[0.9px]">DIF:-0.03</span>
        <Arrow />
        <span className="ml-5 w-[190px] pb-1.5 tracking-[1.4px] text-[#ecc024]">DEA:-0.01</span>
        <span className="text-[#ecc024]">
          <Arrow />
        </span>
        <span className="ml-[21px] w-[147px] pb-1.5 tracking-[1.6px] text-[#cc2fcc]">M:-0.05</span>
        <span className="text-[#cc2fcc]">
          <Arrow />
        </span>
      </div>
      <div className="relative h-[230px]">
        <svg className="absolute inset-0" width="1080" height="228" viewBox="0 0 1080 228" fill="none">
          <rect x="12.500" y="1" width="1054" height="225.500" stroke="#e0e0e0" strokeWidth="2" />
          <g shapeRendering="crispEdges">
            {bars.map(({ x, h }) => (
              <rect key={x} x={x} y={h < 0 ? zero + h : zero} width="2.100" height={Math.abs(h)} fill={h < 0 ? "#cf2e2b" : "#00a000"} />
            ))}
          </g>
          <g strokeWidth="2.800" strokeLinejoin="round">
            <polyline points={toPoints(DIF, MACD_SCALE, 66)} stroke="#222" />
            <polyline points={toPoints(DEA, MACD_SCALE, 66)} stroke="#ecc024" />
          </g>
        </svg>
        <span className="absolute top-[5px] left-[15px] text-[37px] leading-none text-[#888]">0.23</span>
        <span className="absolute top-[187px] left-[15px] text-[37px] leading-none tracking-[0.8px] text-[#888]">-0.10</span>
      </div>
    </section>
  );
}

function TimeAxis() {
  return (
    <div className="relative mx-3 flex h-[82px] bg-[#f7f7fa] pt-[12px] whitespace-nowrap text-[37.5px] leading-[38px] text-[#666]">
      <span className="w-[277px] pl-[5px] tracking-[0.1px]">20241018 15:00</span>
      <span className="w-[331px]">
        <span className="bg-linear-to-r from-[#e8e8ea] to-[#777] bg-clip-text text-transparent">227</span> 11:30
      </span>
      <span className="w-[261px]">0708 15:00</span>
      <span>1118 11:30</span>
      <i className="absolute top-0 left-[345px] h-[15px] w-[3px] bg-[#666]" />
      <i className="absolute top-0 left-[699px] h-[15px] w-[3px] bg-[#666]" />
      <i className="absolute top-0 right-0 h-[15px] w-[3px] bg-[#666]" />
    </div>
  );
}

function Promo() {
  return (
    <div className="mx-[18px] mt-[18px] flex h-[90px] items-center rounded-full bg-[#fcece2] text-[#dc5a10]">
      <svg className="ml-[30px]" width="46" height="40" viewBox="0 0 46 40" fill="#ee5500">
        <path d="M0 13h4v15H0zM9 13L45 0v40l-12-4q-3 3-8 2l-9-2v-4l-7-2z" />
      </svg>
      <span className="ml-[53px] w-[826px] whitespace-nowrap pb-1.5 text-[39px]">红包来啦！喊你身边的股民一起来领&gt;&gt;</span>
      <span className="h-9 w-0.5 bg-[#dc5a10]/80" />
      <svg className="ml-4" width="32" height="32" viewBox="0 0 32 32" stroke="#dc5a10" strokeWidth="3">
        <path d="M1 1l30 30M31 1L1 31" />
      </svg>
    </div>
  );
}

function NavItem({ label, children }: { label: string; children: ReactNode }) {
  return (
    <div className="flex w-[201.500px] flex-col items-center pt-[5px]">
      <svg width="68" height="68" viewBox="0 0 68 68" fill="none" stroke="#666" strokeWidth="3.200">
        {children}
      </svg>
      <span className="mt-[12px] text-[34.5px] text-[#666]">{label}</span>
    </div>
  );
}

function BottomNav() {
  return (
    <div className="mt-[17px] h-[187px] border-t border-[#cfcfcf] pt-[10px]">
      <div className="flex h-[176px] border-t border-[#cfcfcf] bg-[#f7f8fa]">
        <div className="flex w-[274px] flex-col whitespace-nowrap text-[#109810]">
          <svg className="mt-2 ml-[127px]" width="22" height="8" viewBox="0 0 22 8">
            <path d="M0 8h22L11 0z" fill="#777" />
          </svg>
          <span className="mt-[10px] ml-[68px] text-[39px]">3950.83</span>
          <div className="mt-[13px] flex items-center pl-[41px]">
            <span className="w-[114px] text-[35px] text-[#666]">上证</span>
            <span className="text-[36.5px]">-0.53%</span>
          </div>
        </div>
        <NavItem label="交易">
          <path d="M19 11A27.500 27.500 0 0 1 59 46M50 54A27.500 27.500 0 0 1 9 20" />
          <path d="M3 24l7-6 3 5M65 41l-7 7-1-7" />
          <path d="M24 21l10 12 10-12M34 33v16M24 33h20M24 41h20" />
        </NavItem>
        <NavItem label="发帖">
          <path d="M46 8H13q-6 0-6 6v40q0 6 6 6h41q6 0 6-6V24" />
          <path d="M50 15l5 4-26 25-5 2 2-6zM53 11l5-4 3 3-3 6z" fill="#666" stroke="none" />
        </NavItem>
        <NavItem label="功能">
          <rect x="8.500" y="9.500" width="22" height="22" rx="4" />
          <rect x="8.500" y="37.500" width="22" height="22" rx="4" />
          <rect x="37" y="37.500" width="22" height="22" rx="4" />
          <path d="M46.500 9.500q2-1.500 4 0l9 9.500q1.500 2 0 4l-9 9.500q-2 1.500-4 0l-9-9.500q-1.500-2 0-4z" />
        </NavItem>
        <NavItem label="设自选">
          <circle cx="34" cy="34" r="27" />
          <g fill="#666" stroke="none">
            <circle cx="22" cy="34" r="3" />
            <circle cx="34" cy="34" r="3" />
            <circle cx="46" cy="34" r="3" />
          </g>
        </NavItem>
      </div>
    </div>
  );
}

export default function App() {
  return (
    <div className="h-[2400px] w-[1080px] overflow-hidden bg-white font-['Noto_Sans_CJK_SC',sans-serif] leading-none">
      <StatusBar />
      <Header />
      <Quote />
      <Notice />
      <Tabs />
      <AverageRow />
      <PriceChart />
      <VolumePanel />
      <MacdPanel />
      <TimeAxis />
      <Promo />
      <BottomNav />
    </div>
  );
}
